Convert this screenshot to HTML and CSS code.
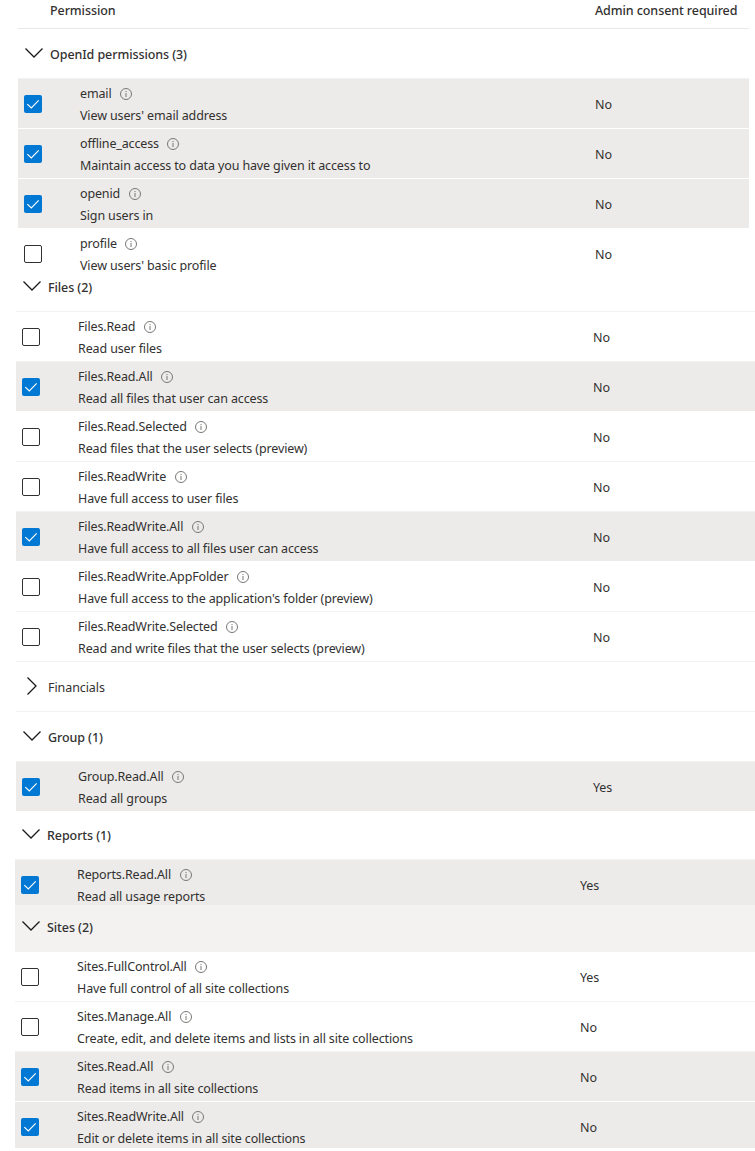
FILE: index.html
```html
<!DOCTYPE html>
<html lang="en">
<head>
<meta charset="utf-8">
<title>API permissions</title>
<link rel="stylesheet" href="styles.css">
</head>
<body>
<svg class="defs" width="0" height="0">
  <symbol id="down" viewBox="0 0 18 18"><path d="M.5 4.500 9 13 17.500 4.500"/></symbol>
  <symbol id="right" viewBox="0 0 18 18"><path d="M4.500 .5 13 9 4.500 17.500"/></symbol>
  <symbol id="tick" viewBox="0 0 18 18"><path d="M3.300 9.200 7.300 13 14.700 5.300"/></symbol>
  <symbol id="info" viewBox="0 0 12 12"><circle cx="6" cy="6" r="5.500"/><path d="M6 5v4M6 3v1.100"/></symbol>
</svg>

<header class="head"><span>Permission</span><span>Admin consent required</span></header>

<section class="panel openid">
  <h2 class="group"><svg class="chev"><use href="#down"/></svg>OpenId permissions (3)</h2>
  <div class="row on"><span class="box"><svg><use href="#tick"/></svg></span><div class="perm"><p class="name">email<svg><use href="#info"/></svg></p><p>View users' email address</p></div><span>No</span></div>
  <div class="row on"><span class="box"><svg><use href="#tick"/></svg></span><div class="perm"><p class="name">offline_access<svg><use href="#info"/></svg></p><p>Maintain access to data you have given it access to</p></div><span>No</span></div>
  <div class="row on"><span class="box"><svg><use href="#tick"/></svg></span><div class="perm"><p class="name">openid<svg><use href="#info"/></svg></p><p>Sign users in</p></div><span>No</span></div>
  <div class="row"><span class="box"></span><div class="perm"><p class="name">profile<svg><use href="#info"/></svg></p><p>View users' basic profile</p></div><span>No</span></div>
</section>

<section class="panel files">
  <h2 class="group first"><svg class="chev"><use href="#down"/></svg>Files (2)</h2>
  <div class="row"><span class="box"></span><div class="perm"><p class="name">Files.Read<svg><use href="#info"/></svg></p><p>Read user files</p></div><span>No</span></div>
  <div class="row on"><span class="box"><svg><use href="#tick"/></svg></span><div class="perm"><p class="name">Files.Read.All<svg><use href="#info"/></svg></p><p>Read all files that user can access</p></div><span>No</span></div>
  <div class="row"><span class="box"></span><div class="perm"><p class="name">Files.Read.Selected<svg><use href="#info"/></svg></p><p>Read files that the user selects (preview)</p></div><span>No</span></div>
  <div class="row"><span class="box"></span><div class="perm"><p class="name">Files.ReadWrite<svg><use href="#info"/></svg></p><p>Have full access to user files</p></div><span>No</span></div>
  <div class="row on"><span class="box"><svg><use href="#tick"/></svg></span><div class="perm"><p class="name">Files.ReadWrite.All<svg><use href="#info"/></svg></p><p>Have full access to all files user can access</p></div><span>No</span></div>
  <div class="row"><span class="box"></span><div class="perm"><p class="name">Files.ReadWrite.AppFolder<svg><use href="#info"/></svg></p><p>Have full access to the application's folder (preview)</p></div><span>No</span></div>
  <div class="row"><span class="box"></span><div class="perm"><p class="name">Files.ReadWrite.Selected<svg><use href="#info"/></svg></p><p>Read and write files that the user selects (preview)</p></div><span>No</span></div>
  <h2 class="group closed"><svg class="chev"><use href="#right"/></svg>Financials</h2>
  <h2 class="group"><svg class="chev"><use href="#down"/></svg>Group (1)</h2>
  <div class="row on"><span class="box"><svg><use href="#tick"/></svg></span><div class="perm"><p class="name">Group.Read.All<svg><use href="#info"/></svg></p><p>Read all groups</p></div><span>Yes</span></div>
</section>

<section class="panel reports">
  <h2 class="group first"><svg class="chev"><use href="#down"/></svg>Reports (1)</h2>
  <div class="row on"><span class="box"><svg><use href="#tick"/></svg></span><div class="perm"><p class="name">Reports.Read.All<svg><use href="#info"/></svg></p><p>Read all usage reports</p></div><span>Yes</span></div>
</section>

<section class="panel sites">
  <h2 class="group first"><svg class="chev"><use href="#down"/></svg>Sites (2)</h2>
  <div class="row"><span class="box"></span><div class="perm"><p class="name">Sites.FullControl.All<svg><use href="#info"/></svg></p><p>Have full control of all site collections</p></div><span>Yes</span></div>
  <div class="row"><span class="box"></span><div class="perm"><p class="name">Sites.Manage.All<svg><use href="#info"/></svg></p><p>Create, edit, and delete items and lists in all site collections</p></div><span>No</span></div>
  <div class="row on"><span class="box"><svg><use href="#tick"/></svg></span><div class="perm"><p class="name">Sites.Read.All<svg><use href="#info"/></svg></p><p>Read items in all site collections</p></div><span>No</span></div>
  <div class="row on"><span class="box"><svg><use href="#tick"/></svg></span><div class="perm"><p class="name">Sites.ReadWrite.All<svg><use href="#info"/></svg></p><p>Edit or delete items in all site collections</p></div><span>No</span></div>
</section>
</body>
</html>
```
FILE: styles.css
```css
* { box-sizing: border-box; }
body {
  margin: 0;
  height: 1151px;
  overflow: hidden;
  background: #fff;
  color: #323130;
  font: 12.5px/22px "Noto Sans", "Open Sans", sans-serif;
  letter-spacing: -0.08px;
}
p, h2 { margin: 0; font: inherit; }
svg { fill: none; flex: none; }
.defs { position: absolute; }

.head {
  display: grid;
  grid-template-columns: 545px 1fr;
  height: 29px;
  margin: 0 6px 0 18px;
  padding-left: 32px;
  border-bottom: 1px solid #e9e8e7;
  font-weight: 500;
}

.panel { overflow: hidden; }
.openid { height: 243px; margin: 0 6px 0 18px; }
.files { height: 539px; margin-left: 16px; }
.reports { height: 94px; margin-left: 15px; }
.sites { height: 243px; margin-left: 15px; }

.group {
  display: flex;
  align-items: center;
  height: 50px;
  padding: 2px 0 0 7px;
  border-top: 1px solid #f3f2f1;
  font-weight: 500;
}
.openid .group { height: 49px; border-top: 0; }
.group.closed { font-weight: 400; }
.files .first { height: 39px; padding: 0 0 8px 7px; border-top: 0; }
.reports .first { height: 48px; padding-top: 1px; border-top: 0; }
.sites .first { height: 46px; padding-top: 0; border-top: 0; background: #f3f2f1; }
.chev {
  width: 18px;
  height: 18px;
  margin: -4px 7px 0 0;
  stroke: #1b1a19;
  stroke-width: 1.3;
}

.row {
  display: grid;
  grid-template-columns: 56px 515px 1fr;
  align-items: center;
  height: 50px;
  padding: 2px 0 0 6px;
  border-top: 1px solid #f3f2f1;
}
.reports .row, .sites .row { grid-template-columns: 56px 503px 1fr; }
.on { background: #edebe9; background-clip: padding-box; }
.on + .row { border-top-color: #fff; }
.perm { letter-spacing: -0.13px; }
.box {
  width: 18px;
  height: 18px;
  margin-top: -2px;
  border: 1px solid #323130;
  border-radius: 2px;
}
.on .box { border: 0; background: #0078d4; }
.box svg { display: block; width: 18px; height: 18px; stroke: #fff; stroke-width: 1.1; }
.name { display: flex; align-items: center; gap: 8.500px; letter-spacing: -0.15px; }
.name svg { width: 12px; height: 12px; margin-top: 1px; stroke: #797775; stroke-width: 1; }
```
